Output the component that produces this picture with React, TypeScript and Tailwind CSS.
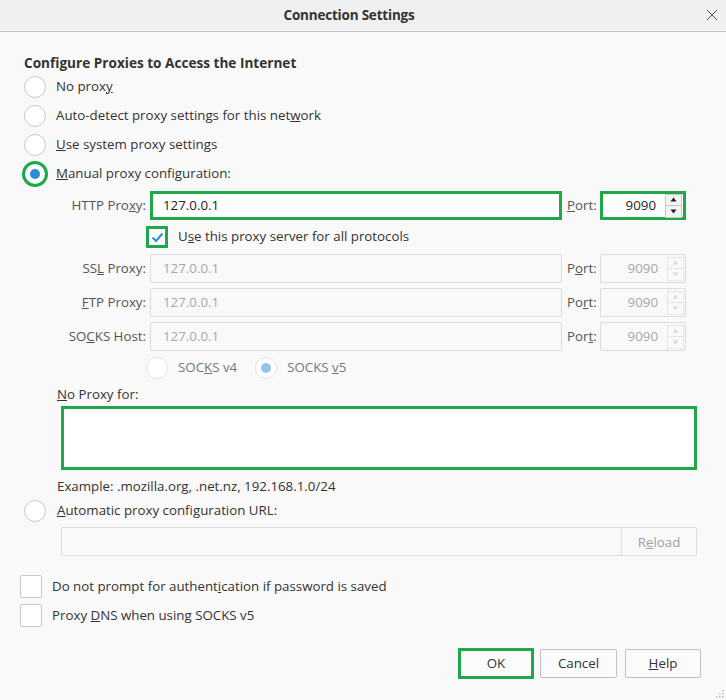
import React from 'react';

const font = { fontFamily: '"Open Sans", "Noto Sans", sans-serif' };

function Radio({ checked, ring, disabled }: { checked?: boolean; ring?: boolean; disabled?: boolean }) {
  return (
    <div className={`relative w-[22px] h-[22px] shrink-0 rounded-full border bg-white flex items-center justify-center ${disabled ? 'border-[#e2e2e2]' : 'border-[#c8c8c8]'}`}>
      {checked && <div className={`w-[10px] h-[10px] rounded-full ${disabled ? 'bg-[#8ec7e8]' : 'bg-[#2a8fd8]'}`} />}
      {ring && <div className="absolute -inset-[3px] rounded-full border-[3px] border-[#1fa84a]" />}
    </div>
  );
}

function Spinner({ disabled }: { disabled?: boolean }) {
  const c = disabled ? 'border-[#e6e6e6] bg-[#f9f9f9]' : 'border-[#c8c8c8] bg-[#f4f4f4]';
  const a = disabled ? '#dcdcdc' : '#222';
  return (
    <div className="flex flex-col mr-[1px]">
      <div className={`w-[17px] h-[12px] border ${c} flex items-center justify-center`}>
        <svg width="7" height="5" viewBox="0 0 7 5"><path d="M3.5 0.5 L6.5 4.5 L0.5 4.5 Z" fill={a} /></svg>
      </div>
      <div className={`w-[17px] h-[12px] border border-t-0 ${c} flex items-center justify-center`}>
        <svg width="7" height="5" viewBox="0 0 7 5"><path d="M0.5 0.5 L6.5 0.5 L3.5 4.5 Z" fill={a} /></svg>
      </div>
    </div>
  );
}

function ProxyRow({ label, portLabel, active }: { label: React.ReactNode; portLabel: React.ReactNode; active?: boolean }) {
  return (
    <div className="flex items-center h-[29px]">
      <div className="w-[126px] pr-[4px] text-right text-[#555] whitespace-nowrap">{label}</div>
      <div className={`w-[412px] h-[29px] flex items-center ${active ? 'border-[3px] border-[#1fa84a] bg-white text-[#222] pl-[10px]' : 'border border-[#dcdcdc] rounded-[2px] bg-[#f9f9f9] text-[#a8a8a8] pl-[12px]'}`}>
        127.0.0.1
      </div>
      <div className="w-[38px] pl-[5px] text-[#555]">{portLabel}</div>
      <div className={`w-[86px] h-[29px] flex items-center justify-end ${active ? 'border-[3px] border-[#1fa84a] bg-white text-[#222]' : 'border border-[#dcdcdc] rounded-[2px] bg-[#f9f9f9] text-[#a8a8a8]'}`}>
        <span className="mr-[9px]">9090</span>
        <Spinner disabled={!active} />
      </div>
    </div>
  );
}

export default function App() {
  return (
    <div className="w-[726px] h-[700px] bg-[#f9f9f9] text-[13.3px] text-[#333] relative overflow-hidden" style={font}>
      <div className="h-[32px] bg-[#f0f0f0] border-b border-[#c6c6c6] flex items-center justify-center pr-[28px] relative">
        <span className="font-bold text-[13.5px] text-[#333] tracking-[-0.2px]">Connection Settings</span>
        <svg className="absolute right-[8px] top-[9px]" width="12" height="12" viewBox="0 0 12 12">
          <path d="M1 1 L11 11 M11 1 L1 11" stroke="#555" strokeWidth="1" />
        </svg>
      </div>

      <div className="pl-[24px] pt-[22px]">
        <div className="h-[18px] leading-[18px] font-bold text-[13.6px] text-[#333]">Configure Proxies to Access the Internet</div>

        {[
          <>No prox<u>y</u></>,
          <>Auto-detect proxy settings for this net<u>w</u>ork</>,
          <><u>U</u>se system proxy settings</>,
          <><u>M</u>anual proxy configuration:</>,
        ].map((l, i) => (
          <div key={i} className="flex items-center h-[29px] gap-[10px]">
            <Radio checked={i === 3} ring={i === 3} />
            <span className="text-[#333]">{l}</span>
          </div>
        ))}

        <div className="mt-[3px]">
          <ProxyRow active label={<>HTTP Pro<u>x</u>y:</>} portLabel={<><u>P</u>ort:</>} />
        </div>

        <div className="flex items-center h-[34px] pl-[122px]">
          <div className="w-[22px] h-[22px] border-[3px] border-[#1fa84a] bg-white flex items-center justify-center">
            <svg width="13" height="11" viewBox="0 0 13 11"><path d="M1.5 5.5 L5 9 L11.5 1.5" stroke="#2a8fd8" strokeWidth="2" fill="none" /></svg>
          </div>
          <span className="ml-[10px]">U<u>s</u>e this proxy server for all protocols</span>
        </div>

        <div className="flex flex-col gap-[5px]">
          <ProxyRow label={<>SS<u>L</u> Proxy:</>} portLabel={<>P<u>o</u>rt:</>} />
          <ProxyRow label={<><u>F</u>TP Proxy:</>} portLabel={<>Po<u>r</u>t:</>} />
          <ProxyRow label={<>SO<u>C</u>KS Host:</>} portLabel={<>Por<u>t</u>:</>} />
        </div>

        <div className="flex items-center h-[33px] pl-[122px] text-[#777]">
          <Radio disabled />
          <span className="ml-[10px]">SOC<u>K</u>S v4</span>
          <div className="ml-[18px]"><Radio checked disabled /></div>
          <span className="ml-[10px]">SOCKS <u>v</u>5</span>
        </div>

        <div className="pl-[33px] h-[20px] leading-[20px]"><u>N</u>o Proxy for:</div>
        <div className="ml-[37px] mt-[2px] w-[636px] h-[64px] border-[3px] border-[#1fa84a] bg-white" />
        <div className="pl-[33px] h-[20px] leading-[20px] mt-[6px]">Example: .mozilla.org, .net.nz, 192.168.1.0/24</div>

        <div className="flex items-center h-[24px] mt-[3px] gap-[11px]">
          <Radio />
          <span><u>A</u>utomatic proxy configuration URL:</span>
        </div>
        <div className="ml-[37px] mt-[4px] w-[636px] h-[29px] border border-[#dcdcdc] rounded-[2px] bg-[#f9f9f9] flex justify-end">
          <div className="w-[75px] border-l border-[#e2e2e2] flex items-center justify-center text-[#a0a0a0] pt-[2px]">R<u>e</u>load</div>
        </div>
      </div>

      <div className="pl-[20px] mt-[18px] flex flex-col gap-[6px]">
        <div className="flex items-center h-[23px] gap-[10px] mt-[1px]">
          <div className="w-[22px] h-[23px] border border-[#c8c8c8] rounded-[2px] bg-white" />
          <span>Do not prompt for authent<u>i</u>cation if password is saved</span>
        </div>
        <div className="flex items-center h-[23px] gap-[10px]">
          <div className="w-[22px] h-[23px] border border-[#c8c8c8] rounded-[2px] bg-white" />
          <span>Proxy <u>D</u>NS when using SOCKS v5</span>
        </div>
      </div>

      <div className="flex justify-end items-center gap-[6px] pr-[25px] mt-[21px]">
        <div className="w-[76px] h-[31px] border-[3px] border-[#1fa84a] bg-[#fbfbfb] flex items-center justify-center">OK</div>
        <div className="w-[77px] h-[29px] border border-[#c0c0c0] rounded-[2px] bg-[#fbfbfb] flex items-center justify-center">Cancel</div>
        <div className="w-[76px] h-[29px] border border-[#c0c0c0] rounded-[2px] bg-[#fbfbfb] flex items-center justify-center ml-[2px]"><u>H</u>elp</div>
      </div>

      <svg className="absolute right-[2px] bottom-[2px]" width="8" height="8" viewBox="0 0 8 8">
        <rect x="6" y="0" width="1.5" height="1.5" fill="#bbb" />
        <rect x="3" y="3" width="1.5" height="1.5" fill="#bbb" />
        <rect x="6" y="3" width="1.5" height="1.5" fill="#bbb" />
        <rect x="0" y="6" width="1.5" height="1.5" fill="#bbb" />
        <rect x="3" y="6" width="1.5" height="1.5" fill="#bbb" />
        <rect x="6" y="6" width="1.5" height="1.5" fill="#bbb" />
      </svg>
    </div>
  );
}
